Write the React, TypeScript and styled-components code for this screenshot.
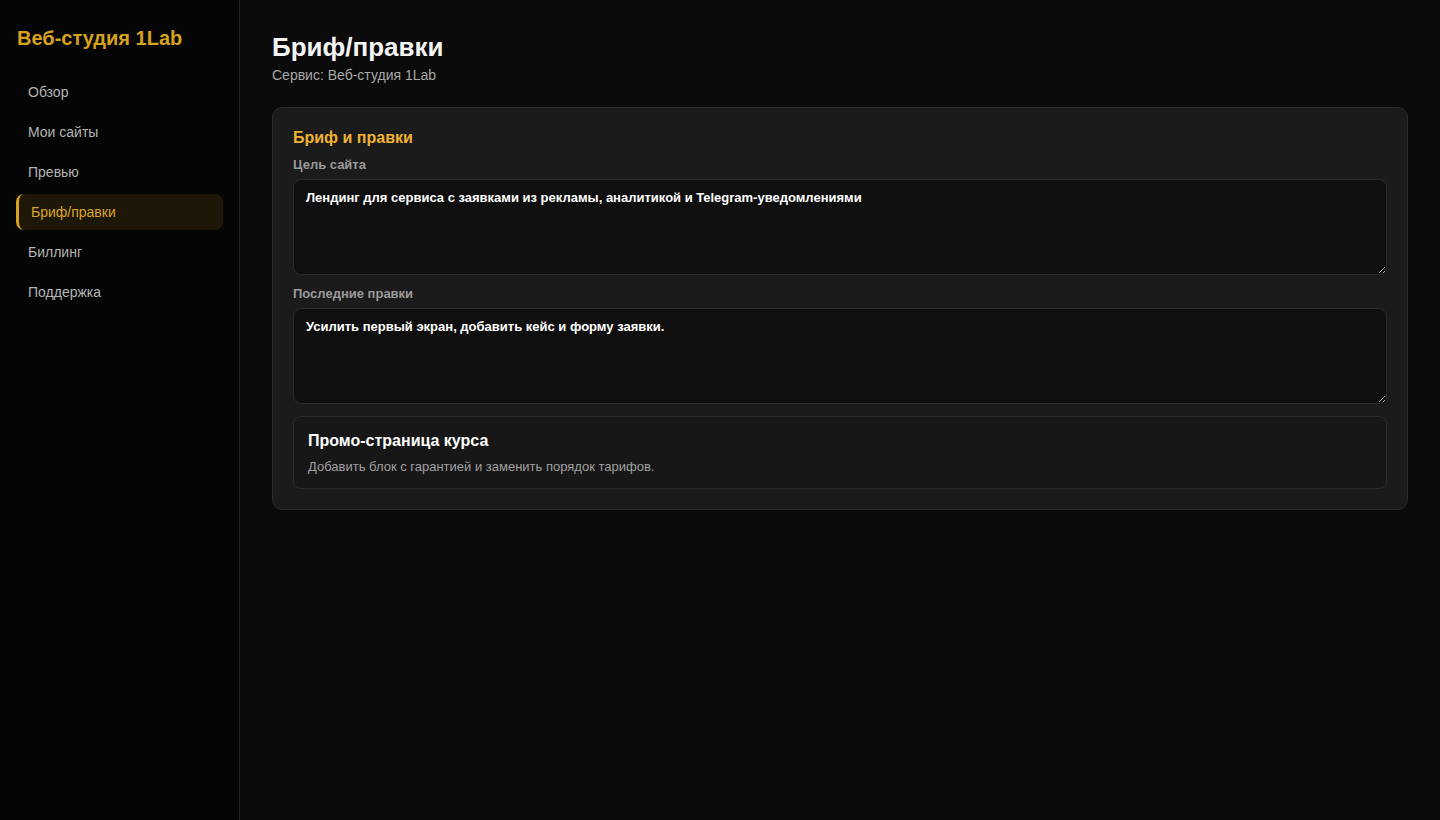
import React from "react";
import styled, { createGlobalStyle } from "styled-components";

const Global = createGlobalStyle`
  html, body { margin: 0; padding: 0; background: #0b0b0b; }
  body { font-family: "Liberation Sans", Arial, sans-serif; color: #eaeaea; }
  * { box-sizing: border-box; }
`;

const Layout = styled.div`
  display: flex;
  min-height: 820px;
`;

const Sidebar = styled.aside`
  width: 240px;
  flex-shrink: 0;
  background: #050505;
  border-right: 1px solid #222;
  padding: 27px 16px;
  display: flex;
  flex-direction: column;
`;

const Brand = styled.div`
  font-size: 20px;
  font-weight: 700;
  line-height: 23px;
  color: #d6a11c;
  padding-left: 1px;
  margin-bottom: 24px;
`;

const Nav = styled.nav`
  display: flex;
  flex-direction: column;
  gap: 4px;
`;

const NavItem = styled.a<{ $active?: boolean }>`
  display: flex;
  align-items: center;
  height: 36px;
  padding: 0 12px;
  font-size: 14px;
  border-radius: 8px;
  text-decoration: none;
  color: ${(p) => (p.$active ? "#d9a423" : "#b4b4b4")};
  background: ${(p) => (p.$active ? "#1e1708" : "transparent")};
  border-left: ${(p) => (p.$active ? "3px solid #d6a11c" : "none")};
`;

const Main = styled.main`
  flex: 1;
  padding: 32px 32px;
`;

const Title = styled.h1`
  margin: 0;
  font-size: 26px;
  line-height: 31px;
  font-weight: 700;
  color: #f5f5f5;
`;

const Sub = styled.div`
  margin-top: 4px;
  font-size: 14px;
  line-height: 17px;
  color: #a8a8a8;
`;

const Card = styled.section`
  margin-top: 23px;
  background: #1b1b1b;
  border: 1px solid #2a2a2a;
  border-radius: 10px;
  padding: 20px;
  display: flex;
  flex-direction: column;
`;

const CardTitle = styled.h2`
  margin: 0 0 10px;
  font-size: 16px;
  line-height: 19px;
  font-weight: 700;
  color: #f0b232;
`;

const Label = styled.label`
  font-size: 13px;
  line-height: 16px;
  font-weight: 700;
  color: #9a9a9a;
  margin-bottom: 6px;
`;

const Area = styled.textarea`
  display: block;
  width: 100%;
  height: 96px;
  background: #0f0f0f;
  border: 1px solid #2c2c2c;
  border-radius: 8px;
  padding: 10px 12px;
  font-family: "Liberation Sans", Arial, sans-serif;
  font-size: 13px;
  line-height: 16px;
  font-weight: 700;
  color: #ffffff;
  resize: vertical;
  outline: none;
  margin-bottom: 11px;
`;

const Item = styled.div`
  margin-top: 1px;
  background: #171717;
  border: 1px solid #2a2a2a;
  border-radius: 8px;
  padding: 14px 14px;
`;

const ItemTitle = styled.div`
  font-size: 16px;
  line-height: 19px;
  font-weight: 700;
  color: #ffffff;
`;

const ItemText = styled.div`
  margin-top: 9px;
  font-size: 13px;
  line-height: 15px;
  color: #a0a0a0;
`;

const navs = ["Обзор", "Мои сайты", "Превью", "Бриф/правки", "Биллинг", "Поддержка"];

export default function App() {
  return (
    <>
      <Global />
      <Layout>
        <Sidebar>
          <Brand>Веб-студия 1Lab</Brand>
          <Nav>
            {navs.map((n) => (
              <NavItem key={n} $active={n === "Бриф/правки"}>
                {n}
              </NavItem>
            ))}
          </Nav>
        </Sidebar>
        <Main>
          <Title>Бриф/правки</Title>
          <Sub>Сервис: Веб-студия 1Lab</Sub>
          <Card>
            <CardTitle>Бриф и правки</CardTitle>
            <Label>Цель сайта</Label>
            <Area defaultValue="Лендинг для сервиса с заявками из рекламы, аналитикой и Telegram-уведомлениями" />
            <Label>Последние правки</Label>
            <Area defaultValue="Усилить первый экран, добавить кейс и форму заявки." />
            <Item>
              <ItemTitle>Промо-страница курса</ItemTitle>
              <ItemText>Добавить блок с гарантией и заменить порядок тарифов.</ItemText>
            </Item>
          </Card>
        </Main>
      </Layout>
    </>
  );
}
